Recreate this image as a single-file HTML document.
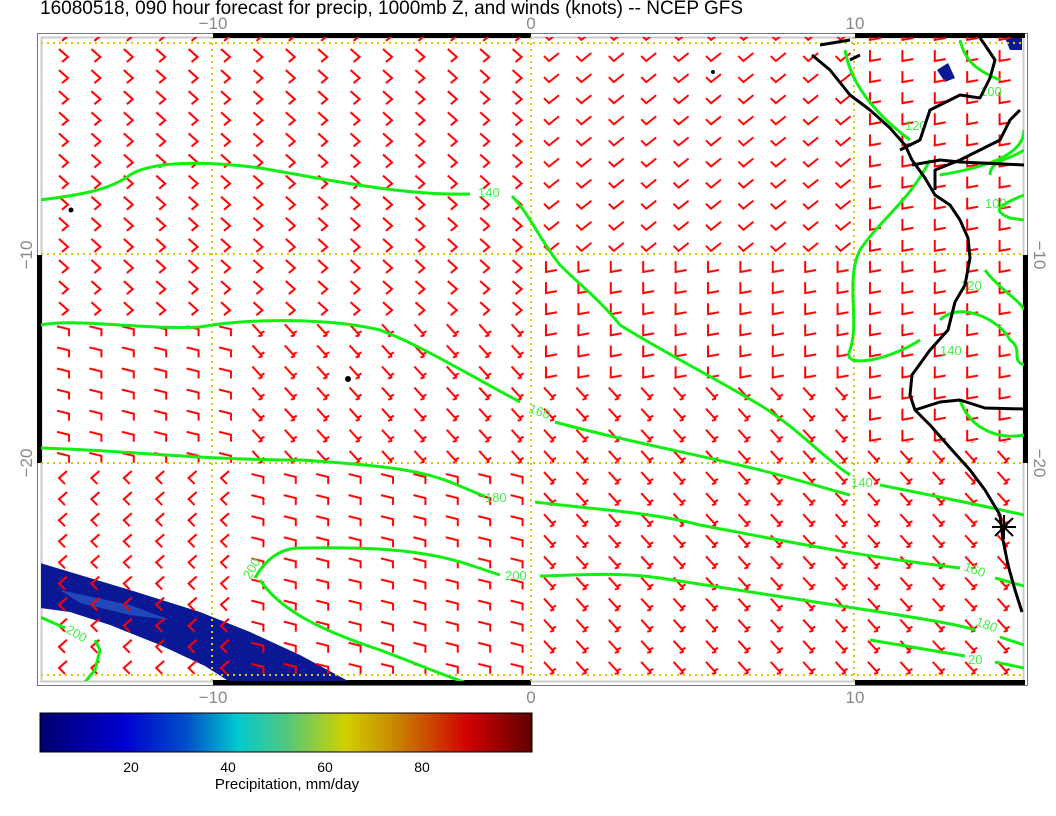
<!DOCTYPE html>
<html><head><meta charset="utf-8"><style>
html,body{margin:0;padding:0;background:#fff;width:1056px;height:816px;overflow:hidden}
svg{display:block}
</style></head><body>
<svg width="1056" height="816" viewBox="0 0 1056 816" xmlns="http://www.w3.org/2000/svg" font-family="Liberation Sans, sans-serif">
<defs>
<pattern id="pA" patternUnits="userSpaceOnUse" x="49" y="46" width="32.4" height="21.1">
<path d="M10 3 L19 11 L13 16" fill="none" stroke="#f00" stroke-width="2"/></pattern>
<pattern id="pC" patternUnits="userSpaceOnUse" x="49" y="46" width="32.4" height="21.1">
<path d="M9 10 L14 15 L24 7" fill="none" stroke="#f00" stroke-width="2"/></pattern>
<pattern id="pL" patternUnits="userSpaceOnUse" x="49" y="46" width="32.4" height="21.1">
<path d="M11 4 L11 15 L22 13" fill="none" stroke="#f00" stroke-width="2"/></pattern>
<pattern id="pD" patternUnits="userSpaceOnUse" x="49" y="46" width="32.4" height="21.1">
<path d="M9 4 L19 15 M19 15 L15 16 M17 13 L21 11" fill="none" stroke="#f00" stroke-width="2"/></pattern>
<pattern id="pG" patternUnits="userSpaceOnUse" x="49" y="46" width="32.4" height="21.1">
<path d="M8 6 L20 9 L20 16" fill="none" stroke="#f00" stroke-width="2"/></pattern>
<pattern id="pE" patternUnits="userSpaceOnUse" x="49" y="46" width="32.4" height="21.1">
<path d="M18 3 L10 10 L16 16" fill="none" stroke="#f00" stroke-width="2"/></pattern>
<linearGradient id="cb" x1="0" x2="1" y1="0" y2="0">
<stop offset="0" stop-color="#00006e"/><stop offset="0.17" stop-color="#0000d0"/>
<stop offset="0.3" stop-color="#0050c8"/><stop offset="0.4" stop-color="#00c8d0"/>
<stop offset="0.5" stop-color="#50c880"/><stop offset="0.62" stop-color="#d0d000"/>
<stop offset="0.73" stop-color="#c88000"/><stop offset="0.87" stop-color="#d00000"/>
<stop offset="1" stop-color="#600000"/></linearGradient>
<clipPath id="plot"><rect x="41" y="37" width="983" height="644"/></clipPath>
</defs>

<text x="40" y="14" font-size="19" fill="#000">16080518, 090 hour forecast for precip, 1000mb Z, and winds (knots) -- NCEP GFS</text>

<!-- frame -->
<rect x="37.5" y="33.5" width="990" height="652" fill="none" stroke="#777" stroke-width="1"/>
<rect x="41.5" y="37.5" width="982" height="644" fill="none" stroke="#ccc" stroke-width="2"/>
<rect x="213" y="33" width="318" height="5" fill="#000"/>
<rect x="855" y="33" width="170" height="5" fill="#000"/>
<rect x="213" y="680" width="318" height="5" fill="#000"/>
<rect x="855" y="680" width="170" height="5" fill="#000"/>
<rect x="37" y="255" width="5" height="208" fill="#000"/>
<rect x="1023" y="255" width="5" height="208" fill="#000"/>

<g font-size="17" fill="#888">
<text x="213" y="29" text-anchor="middle">−10</text>
<text x="531" y="29" text-anchor="middle">0</text>
<text x="855" y="29" text-anchor="middle">10</text>
<text x="213" y="703" text-anchor="middle">−10</text>
<text x="531" y="703" text-anchor="middle">0</text>
<text x="855" y="703" text-anchor="middle">10</text>
<text transform="translate(32,255) rotate(-90)" text-anchor="middle">−10</text>
<text transform="translate(32,463) rotate(-90)" text-anchor="middle">−20</text>
<text transform="translate(1034,255) rotate(90)" text-anchor="middle">−10</text>
<text transform="translate(1034,463) rotate(90)" text-anchor="middle">−20</text>
</g>

<g clip-path="url(#plot)">
<!-- precip band -->
<path d="M40 563 L80 575 L130 590 L200 612 L250 632 L300 655 L350 682 L230 682 L205 666 L160 645 L110 625 L70 612 L40 608 Z" fill="#0a1896"/>
<path d="M60 590 L130 605 L170 620 L130 615 L80 603 Z" fill="#2a5cc8" opacity="0.7"/>
<path d="M1005 38 L1022 38 L1022 50 L1010 50 Z" fill="#0a1896"/>
<path d="M937 70 L948 63 L955 78 L945 82 Z" fill="#0a1896"/>

<!-- barbs (region edges aligned to cells: x=49+32.4k, y=46+21.1k) -->
<rect x="41" y="37" width="494" height="220" fill="url(#pA)"/>
<rect x="535" y="37" width="324" height="220" fill="url(#pC)"/>
<rect x="859" y="37" width="170" height="404.7" fill="url(#pL)"/>
<rect x="535" y="257" width="324" height="126.6" fill="url(#pL)"/>
<rect x="41" y="257" width="494" height="63.3" fill="url(#pA)"/>
<rect x="41" y="320.3" width="202.4" height="147.7" fill="url(#pG)"/>
<rect x="243.4" y="320.3" width="291.6" height="147.7" fill="url(#pD)"/>
<rect x="535" y="383.6" width="324" height="300" fill="url(#pD)"/>
<rect x="859" y="441.7" width="170" height="242" fill="url(#pD)"/>
<rect x="243.4" y="468" width="291.6" height="216" fill="url(#pG)"/>
<rect x="41" y="468" width="202.4" height="216" fill="url(#pE)"/>

<!-- dotted grid -->
<g stroke="#d8c800" stroke-width="2" stroke-dasharray="2,4" fill="none">
<path d="M41 43 H1024 M41 254 H1024 M41 463 H1024 M41 675 H1024 M212 37 V681 M531 37 V681 M854 37 V681"/>
</g>

<!-- contours -->
<g stroke="#11ee11" stroke-width="3" fill="none">
<path d="M40 200 C80 195 110 190 130 175 C150 162 200 160 260 168 C320 178 400 196 470 194"/>
<path d="M512 196 C530 215 540 240 560 265 C580 285 600 300 620 325 C660 350 700 370 760 405 C800 430 820 455 850 475"/>
<path d="M880 485 C930 495 980 505 1024 515"/>
<path d="M40 325 C80 318 140 330 200 327 C250 318 330 318 380 330 C420 345 460 370 520 402"/>
<path d="M555 422 C620 440 700 455 760 470 C800 480 830 490 850 495"/>
<path d="M40 448 C120 450 200 460 300 460 C380 465 420 470 450 482 C470 490 480 495 485 496"/>
<path d="M535 502 C600 510 650 512 700 525 C780 540 850 555 960 568"/>
<path d="M995 578 L1024 586"/>
<path d="M255 578 C265 560 280 548 300 548 C360 547 420 548 470 565 L500 575"/>
<path d="M540 576 C580 575 620 572 660 578 C740 590 800 600 880 612 C930 620 960 625 975 630"/>
<path d="M1000 637 L1024 645"/>
<path d="M260 580 C280 610 320 630 380 650 C420 665 450 678 470 684"/>
<path d="M40 617 L65 628 M95 640 L100 650 L95 670 L85 682"/>
<path d="M870 640 C900 645 930 650 965 656 M995 662 L1024 668"/>
<path d="M845 50 C850 80 870 110 910 140 M960 40 C965 60 975 70 1000 80"/>
<path d="M940 175 C1000 165 1024 150 1024 130"/>
<path d="M1024 195 C1000 205 990 210 1010 218 L1024 220"/>
<path d="M930 160 C910 200 880 220 860 250 C845 280 860 320 850 350 C840 370 890 360 920 340"/>
<path d="M985 270 C1000 290 1020 300 1024 310 M940 320 C960 300 1000 320 1010 340 C1024 350 1010 360 1024 365"/>
<path d="M1024 150 C1010 160 990 160 990 175"/>
<path d="M960 400 C970 430 1000 440 1024 435"/>
</g>
<g font-size="13" fill="#44ee44">
<text x="478" y="197">140</text>
<text x="851" y="487">140</text>
<text transform="translate(528,412) rotate(20)">160</text>
<text x="485" y="502">180</text>
<text x="505" y="580">200</text>
<text transform="translate(963,570) rotate(20)">160</text>
<text transform="translate(975,625) rotate(20)">180</text>
<text x="968" y="664">20</text>
<text transform="translate(250,580) rotate(-60)">200</text>
<text transform="translate(65,632) rotate(30)">200</text>
<text x="980" y="96">100</text>
<text x="985" y="208">100</text>
<text x="960" y="290">120</text>
<text x="940" y="355">140</text>
<text x="905" y="130">120</text>
</g>

<!-- coastline -->
<g stroke="#000" stroke-width="3" fill="none" stroke-linejoin="round">
<path d="M812 55 L830 70 L850 95 L870 110 L890 128 L905 145 L912 160 L925 178 L935 195 L950 205 L960 220 L968 238 L970 258 L965 285 L955 302 L948 330 L930 350 L912 375 L910 395 L915 410 L930 425 L952 450 L970 470 L985 490 L1000 515 L1003 540 L1008 565 L1015 590 L1022 612"/>
<path d="M912 165 L940 160 L960 162 L1024 165"/>
<path d="M915 410 L940 402 L960 400 L985 408 L1024 409"/>
<path d="M935 190 L935 170 L960 160 L980 150 L1000 140 L1010 120 L1020 110"/>
<path d="M900 150 L920 140 L930 110 L960 95 L980 98 L990 78 L995 60 L985 45 L980 38"/>
<path d="M820 45 L850 40 M850 60 L860 55"/>
</g>
<circle cx="71" cy="210" r="2.5" fill="#000"/>
<circle cx="348" cy="379" r="3" fill="#000"/>
<circle cx="713" cy="72" r="2" fill="#000"/>
<g stroke="#000" stroke-width="2">
<path d="M992 527 H1016 M1004 515 V539 M995 518 L1013 536 M1013 518 L995 536"/>
</g>
</g>

<!-- colorbar -->
<rect x="40" y="713" width="492" height="39" fill="url(#cb)" stroke="#000" stroke-width="1"/>
<g font-size="14" fill="#000" text-anchor="middle">
<text x="131" y="772">20</text>
<text x="228" y="772">40</text>
<text x="325" y="772">60</text>
<text x="422" y="772">80</text>
<text x="287" y="789" font-size="15">Precipitation, mm/day</text>
</g>
</svg>
</body></html>
